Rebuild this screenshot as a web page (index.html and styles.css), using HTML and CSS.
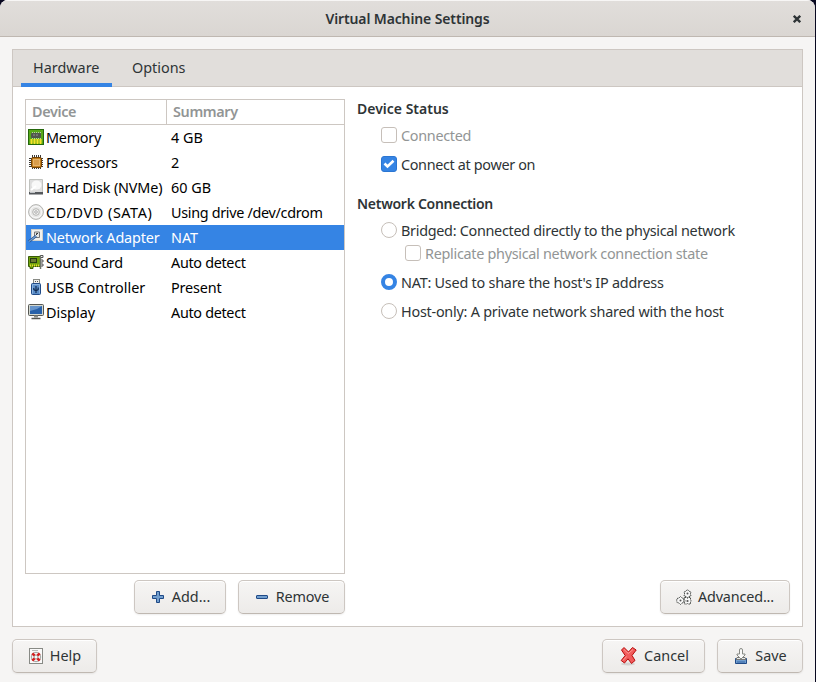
FILE: index.html
```html
<!DOCTYPE html>
<html lang="en">
<head>
<meta charset="utf-8">
<title>Virtual Machine Settings</title>
<link rel="stylesheet" href="styles.css">
</head>
<body>
<div class="window">
  <header class="titlebar">
    <h1>Virtual Machine Settings</h1>
    <button class="close" aria-label="Close"><svg width="8" height="8" viewBox="0 0 8 8"><path d="M.8.8l6.400 6.400M7.200.8L.8 7.200" stroke="#2e3436" stroke-width="2.300"/></svg></button>
  </header>
  <main class="notebook">
    <nav class="tabs">
      <div class="tab active">Hardware</div>
      <div class="tab">Options</div>
    </nav>
    <div class="page">
      <section class="devices">
        <div class="tree">
          <div class="row head"><div class="dev">Device</div><div class="sum">Summary</div></div>
          <div class="row"><div class="dev"><svg width="16" height="16"><rect x=".5" y=".5" width="15" height="15" fill="#57a818" stroke="#25670b"/><path d="M2 10h12v4.500H2z" fill="#9fc21d"/><path d="M3.500 10v5M6.500 10v5M9.500 10v5M12.500 10v5" stroke="#f6e22a" stroke-width="1.500"/><path d="M4 3.500h9M4 9.500h9" stroke="#bccaab" stroke-dasharray="1 1"/><rect x="3" y="4" width="10" height="5" rx="1" fill="#50564d"/><path d="M5 6h6" stroke="#8d9489" stroke-dasharray="2 1"/></svg><span class="snug">Memory</span></div><div class="sum">4 GB</div></div>
          <div class="row"><div class="dev"><svg width="16" height="16"><path d="M4.500 1v14M6.500 1v14M8.500 1v14M10.500 1v14M12.500 1v14M1 4.500h14M1 6.500h14M1 8.500h14M1 10.500h14M1 12.500h14" stroke="#3d3b38"/><rect x="3.500" y="3.500" width="10" height="10" rx="1.500" fill="#c17d1c" stroke="#744306"/><rect x="5.500" y="5.500" width="6" height="6" fill="#d99d4a" stroke="#e7b36a"/></svg><span class="slight">Processors</span></div><div class="sum">2</div></div>
          <div class="row"><div class="dev"><svg width="16" height="16"><path d="M1.500.5h13v13h-13z" fill="#dedede" stroke="#c0c2be"/><path d="M1 13h14v2.500H1z" fill="#55585c"/><path d="M2 13.500h5" stroke="#bfc2c5"/><ellipse cx="8.500" cy="6" rx="5" ry="4.500" fill="#f8f8f8"/><path d="M3 11l5-4" stroke="#fff" stroke-width="2"/></svg><span class="slight">Hard Disk (NVMe)</span></div><div class="sum">60 GB</div></div>
          <div class="row"><div class="dev"><svg width="16" height="16"><circle cx="8" cy="8" r="7.400" fill="#e8e8e7" stroke="#b3b3b0"/><circle cx="8" cy="8" r="5.800" fill="none" stroke="#f8f8f8"/><circle cx="8" cy="8" r="3.300" fill="#f4f4f3" stroke="#b5b5b2"/><circle cx="8" cy="8" r="1.300" fill="#fff" stroke="#aaa"/></svg><span class="loose">CD/DVD (SATA)</span></div><div class="sum tight">Using drive /dev/cdrom</div></div>
          <div class="row selected"><div class="dev"><svg width="16" height="16"><rect x="3.500" y=".5" width="11" height="11" fill="#f1f1ee" stroke="#d1d1cc"/><path d="M6.500 8.500V3h5v5.500z" fill="#e5e7e5" stroke="#777"/><path d="M8.500 6V4.500h1.500" fill="none" stroke="#333"/><path d="M1 12.500L8 7" fill="none" stroke="#204a87" stroke-width="2.600"/><path d="M1 12.500L8 7" fill="none" stroke="#729fcf" stroke-width="1.400"/></svg><span class="slight">Network Adapter</span></div><div class="sum">NAT</div></div>
          <div class="row"><div class="dev"><svg width="16" height="16"><path d="M.5 2.500h12v10H5v2H2v-2H.5z" fill="#71a30b" stroke="#395c09"/><rect x="2.500" y="4.500" width="6" height="4" fill="#6c7b33" stroke="#263d14"/><path d="M2 11.500h9" stroke="#e9db2e" stroke-width="2" stroke-dasharray="1 1"/><path d="M12.500 1v14" stroke="#6f746b" stroke-width="1.500"/><path d="M13 1.500h2v2h-2M13 6h2v2h-2M13 10h2v2h-2" fill="#eee" stroke="#555"/></svg><span class="slight">Sound Card</span></div><div class="sum tight">Auto detect</div></div>
          <div class="row"><div class="dev"><svg width="16" height="16"><rect x="5.500" y=".5" width="6" height="5" fill="#eeeeec" stroke="#888a85"/><path d="M7 2.500h1M9 2.500h1" stroke="#555"/><rect x="3.500" y="4.500" width="9" height="11" rx="1" fill="#5b8dc8" stroke="#204a87"/><path d="M4.500 14.500V5.500h7v9" fill="none" stroke="#8bb3df"/><path d="M8 7v7M5.800 9v1.500L8 12l2.200-1.500V8.500" fill="none" stroke="#102a50" stroke-width="1.200"/></svg><span>USB Controller</span></div><div class="sum slight">Present</div></div>
          <div class="row"><div class="dev"><svg width="16" height="16"><rect x=".5" y=".5" width="15" height="11" rx="1" fill="#d3d7cf" stroke="#555753"/><rect x="2" y="2" width="12" height="8" fill="#2861a9"/><path d="M2 7V2h12L9 5z" fill="#6795cc"/><path d="M6 11.500h4v2H6z" fill="#888a85"/><path d="M3.500 14.500h9" stroke="#555753" stroke-width="1.500"/></svg><span>Display</span></div><div class="sum tight">Auto detect</div></div>
        </div>
        <div class="actions">
          <button class="btn add"><svg width="16" height="16"><path d="M6.500 2.500h3v4h4v3h-4v4h-3v-4h-4v-3h4z" fill="#729fcf" stroke="#204a87" stroke-linejoin="round"/></svg><span>Add...</span></button>
          <button class="btn remove"><svg width="16" height="16"><rect x="2.500" y="6.500" width="11" height="3" rx=".5" fill="#729fcf" stroke="#204a87"/></svg><span class="slight">Remove</span></button>
        </div>
      </section>
      <section class="details">
        <h2>Device Status</h2>
        <div class="option off connected"><i class="box"></i><span>Connected</span></div>
        <div class="option poweron"><i class="box checked"><svg width="16" height="16"><path d="M3.500 7.500l3 3L12.500 4.700" fill="none" stroke="#fff" stroke-width="2.600"/></svg></i><span>Connect at power on</span></div>
        <h2 class="h-network">Network Connection</h2>
        <div class="option bridged"><i class="box radio"></i><span>Bridged: Connected directly to the physical network</span></div>
        <div class="option off replicate"><i class="box"></i><span>Replicate physical network connection state</span></div>
        <div class="option nat"><i class="box radio chosen"></i><span>NAT: Used to share the host's IP address</span></div>
        <div class="option host"><i class="box radio"></i><span>Host-only: A private network shared with the host</span></div>
        <button class="btn advanced"><svg width="16" height="16"><g fill="#f8f8f8" stroke="#4a4d4a" stroke-dasharray="1.600 .7"><path d="M11.500.7l1.500 1.500 2 .8-.7 2 .7 2-2 .5-1.500 1L10 7.500 8 7l.7-2L8 3l2-.8z"/><path d="M4.500 7.500L6 9l2 .5-.5 2 .5 2-2 .5-1.500 1.500L3 14l-2-.5-.3-2L1 9.500 3 9z"/><path d="M8.500 8.500h2l1 .7 1-.7h2v2l.7 1.500-.7 1v2h-2l-1-.5-1 .5h-2v-2l.7-1-.7-1.500z"/></g><g fill="#555"><circle cx="11.500" cy="4.500" r="1"/><circle cx="4.500" cy="11.500" r="1"/><circle cx="11.500" cy="12" r="1.100"/></g></svg><span class="slight">Advanced...</span></button>
      </section>
    </div>
  </main>
  <footer class="footer">
    <button class="btn help"><svg width="16" height="16"><rect x="1.500" y=".5" width="13" height="15" fill="#fafafa" stroke="#888a85"/><path d="M4 2.500h6" stroke="#b9bab7"/><circle cx="8" cy="9" r="3.400" fill="none" stroke="#f4f4f4" stroke-width="3"/><g fill="none" stroke="#8d8f8b" stroke-width=".8"><circle cx="8" cy="9" r="4.700"/><circle cx="8" cy="9" r="1.900"/></g><path d="M4.300 5.300l2.300 2.300M11.700 5.300L9.400 7.600M4.300 12.700l2.300-2.300M11.700 12.700l-2.300-2.300" stroke="#d42020" stroke-width="2.600"/></svg><span>Help</span></button>
    <button class="btn cancel"><svg width="18" height="20" viewBox="0 0 18 20"><ellipse cx="8" cy="18" rx="7" ry="1.500" fill="#d4d2d0"/><path d="M4 1.500L8.500 6l4-4.500L16.200 4 12 9.500l3 5-3.500 3L8 12.800 4.500 17 1.200 14.500l4-5L1.500 4z" fill="#f15b5b" stroke="#b80c0c" stroke-linejoin="round"/><path d="M4 3.500l4.300 4L13 3.500M3 14.500l3.500-4" fill="none" stroke="#ff9a94"/></svg><span>Cancel</span></button>
    <button class="btn save"><svg width="16" height="16"><path d="M2.500 10.500h11v5h-11z" fill="#729fcf" stroke="#204a87"/><path d="M4 14h8" stroke="#3465a4"/><path d="M4 9.500h8l1 2H3z" fill="#e7e9e6" stroke="#777"/><path d="M6.500 6V2q0-1.500 1.500-1.500T9.500 2v4h2.500v1L8 11 4 7V6z" fill="#f9f9f8" stroke="#888a85"/></svg><span>Save</span></button>
  </footer>
</div>
</body>
</html>
```
FILE: styles.css
```css
* { box-sizing: border-box; }
body {
  margin: 0;
  width: 816px;
  height: 682px;
  overflow: hidden;
  background: #080820;
  color: #2e3436;
  font: 14.4px/20px "Noto Sans", "Open Sans", sans-serif;
}
.window { width: 815px; height: 682px; background: #f6f5f4; border-radius: 8px 8px 0 0; overflow: hidden; }
h1, h2 { margin: 0; font-size: 14px; line-height: 20px; font-weight: 600; white-space: nowrap; }
.titlebar {
  display: grid;
  grid-template-columns: 32px 1fr 32px;
  align-items: center;
  height: 37px;
  padding-top: 1px;
  border-bottom: 1px solid #bfb8b1;
  background: linear-gradient(#e1dedb, #dad6d2);
  box-shadow: inset 0 1px #f7f6f5;
}
.titlebar h1 { grid-column: 2; text-align: center; letter-spacing: -.12px; }
.close { border: 0; padding: 0 0 0 10px; background: none; display: flex; }
.notebook { display: flex; flex-direction: column; height: 578px; width: 791px; margin: 12px 0 0 12px; border: 1px solid #cdc7c2; background: #fff; }
.tabs { display: flex; flex: none; height: 37px; padding-left: 8px; background: #e1dedb; border-bottom: 1px solid #cdc7c2; }
.tab { height: 37px; padding: 8px 12px 0; width: 91px; margin-right: 8px; white-space: nowrap; }
.tab.active { border-bottom: 4px solid #3584e4; }
.page { display: flex; flex: 1; padding: 12px; gap: 12px; }
.devices { width: 320px; }
.tree { height: 475px; border: 1px solid #cdc7c2; color: #000; }
.row { display: flex; height: 25px; white-space: nowrap; }
.dev { width: 141px; display: flex; align-items: center; padding-left: 2px; }
.dev svg { flex: none; margin-right: 2px; position: relative; top: -1px; }
.sum { display: flex; align-items: center; padding-left: 4px; }
.head { color: #929595; font-weight: 600; letter-spacing: -.36px; border-bottom: 1px solid #cdc7c2; }
.head .dev { padding-left: 6px; border-right: 1px solid #cdc7c2; }
.head .sum { padding-left: 6px; }
.selected { background: #3584e4; color: #fff; }
.slight { letter-spacing: -.16px; }
.snug { letter-spacing: -.25px; }
.tight { letter-spacing: -.32px; }
.loose { letter-spacing: .55px; }
.actions { display: flex; justify-content: flex-end; gap: 12px; margin-top: 6px; }
.btn {
  display: flex;
  align-items: center;
  justify-content: center;
  gap: 6px;
  height: 34px;
  padding: 0;
  border: 1px solid #cdc7c2;
  border-bottom-color: #bfb8b1;
  border-radius: 5px;
  background: linear-gradient(#f6f5f4, #edebe9);
  box-shadow: inset 0 1px #fff, 0 1px 2px rgba(0, 0, 0, .07);
  color: #2e3436;
  font: inherit;
  white-space: nowrap;
}
.add { width: 92px; }
.remove { width: 107px; }
.details { flex: 1; display: flex; flex-direction: column; align-items: flex-start; }
.option { display: flex; align-items: center; gap: 4px; height: 20px; margin-left: 24px; white-space: nowrap; letter-spacing: -.29px; }
.option span { padding-top: 1px; }
.off { color: #929595; }
.box { flex: none; width: 16px; height: 16px; border: 1px solid #c6bfb9; border-radius: 3px; background: #fff; }
.box svg { display: block; margin: -1px; }
.radio { border-radius: 50%; }
.checked { background: #3584e4; border-color: #2b76d2; }
.chosen { border: 4px solid #3584e4; }
.connected { margin-top: 6px; }
.poweron { margin-top: 9px; letter-spacing: -.34px; }
.h-network { margin-top: 20px; letter-spacing: -.28px; }
.bridged { margin-top: 6px; }
.replicate { margin-top: 3px; margin-left: 48px; }
.nat { margin-top: 9px; letter-spacing: -.23px; }
.host { margin-top: 9px; letter-spacing: -.24px; }
.advanced { width: 130px; margin: auto 0 0 auto; }
.footer { display: flex; gap: 12px; margin: 12px 12px 0; }
.help { width: 85px; margin-right: auto; }
.cancel { width: 103px; padding-left: 2px; }
.save { width: 86px; }
```
